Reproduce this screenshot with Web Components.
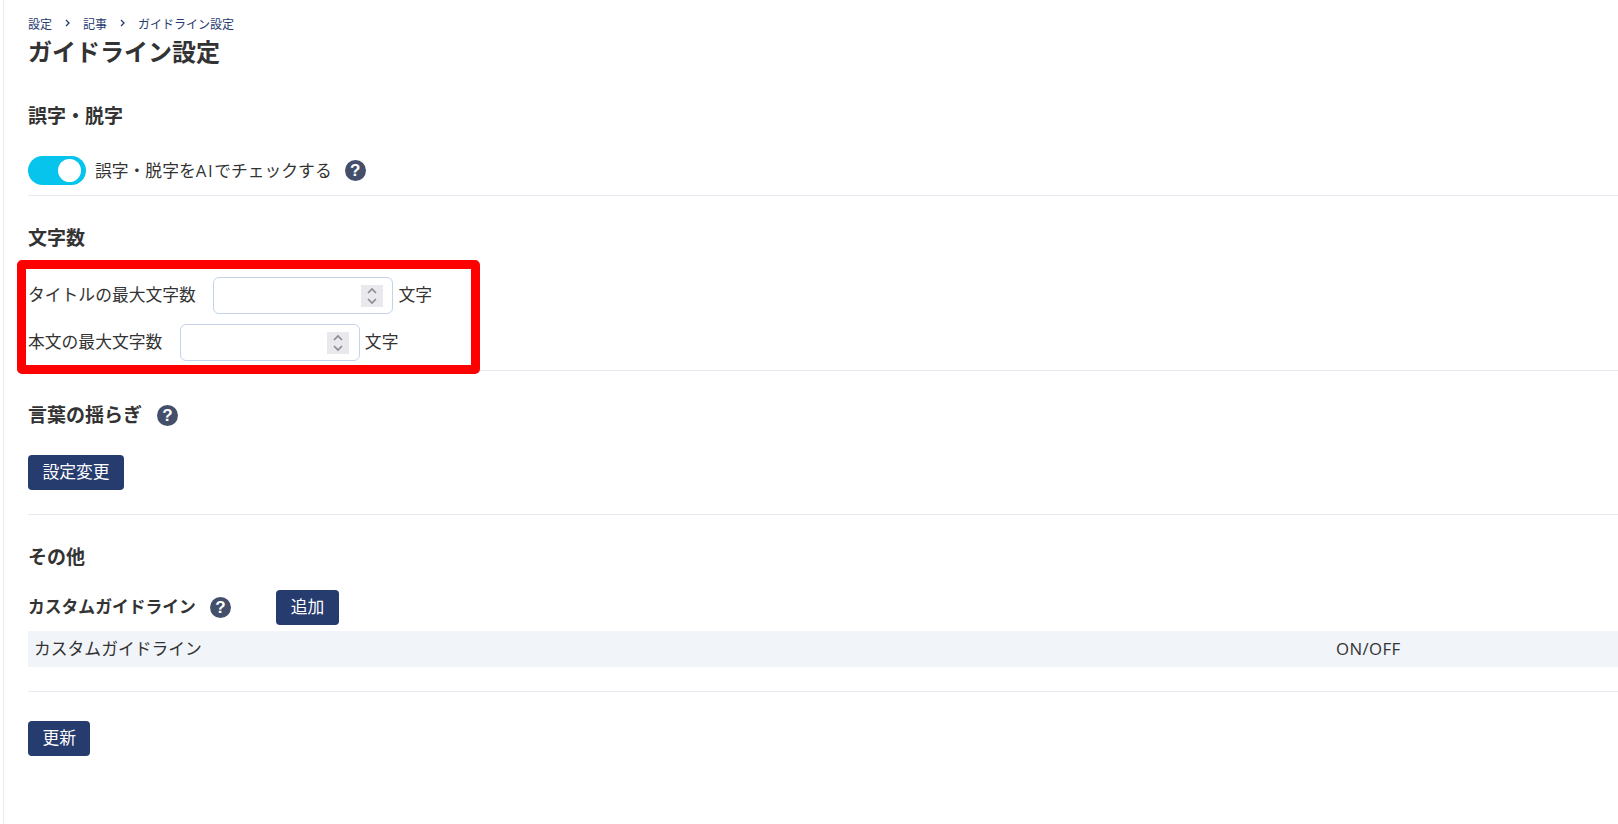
<!DOCTYPE html>
<html lang="ja">
<head>
<meta charset="utf-8">
<title>ガイドライン設定</title>
<style>
  html, body { margin: 0; background: #fff; }
  body { font-family: "Noto Sans CJK JP", "Noto Sans", sans-serif; color: #333; font-size: 16.8px; }
  .latin { font-family: "Open Sans", sans-serif; letter-spacing: 1.6px; }
</style>
</head>
<body>
<gl-page>
  <gl-breadcrumb slot="crumbs" items="設定,記事,ガイドライン設定"></gl-breadcrumb>
  <span slot="title">ガイドライン設定</span>

  <gl-section heading="誤字・脱字" top="32" gap="26" bottom="10">
    <gl-toggle checked>誤字・脱字を<span class="latin">AI</span>でチェックする<gl-help slot="after"></gl-help></gl-toggle>
  </gl-section>

  <gl-section heading="文字数" top="28" gap="25" bottom="9">
    <gl-limit-form>
      <gl-number-field>タイトルの最大文字数</gl-number-field>
      <gl-number-field>本文の最大文字数</gl-number-field>
    </gl-limit-form>
  </gl-section>

  <gl-section heading="言葉の揺らぎ" help top="30" gap="26" bottom="24">
    <gl-button>設定変更</gl-button>
  </gl-section>

  <gl-section heading="その他" top="28" gap="19" bottom="24">
    <gl-custom-list label="カスタムガイドライン" action="追加"></gl-custom-list>
  </gl-section>

  <gl-button class="submit" style="margin-top:29px">更新</gl-button>
</gl-page>

<script>
class GlPage extends HTMLElement {
    connectedCallback() {
        this.root = this.attachShadow({ mode: 'open' });
        this.root.innerHTML = `
          <style>
          :host { display: block; margin-left: 3px; min-height: 824px; box-sizing: border-box; border-left: 1px solid #e8eaf0; padding: 14px 0 0 24px; }
          .title { font-size: 24px; font-weight: 700; line-height: 34px; padding-bottom: 2px; color: #333; }
          </style>
          <slot name="crumbs"></slot>
          <div class="title"><slot name="title"></slot></div>
          <slot></slot>
        `;
    }
}

class GlBreadcrumb extends HTMLElement {
    connectedCallback() {
        this.root = this.attachShadow({ mode: 'open' });
        const chevron = `<svg width="31" height="10" viewBox="0 0 31 10"><path d="M14 2 L17 5 L14 8" fill="none" stroke="#263b6e" stroke-width="1.3"/></svg>`;
        const items = this.getAttribute('items').split(',').map(t => `<span>${t}</span>`).join(chevron);
        this.root.innerHTML = `
          <style>
          :host { display: flex; align-items: center; height: 18px; padding-bottom: 2px; font-size: 12px; color: #263b6e; }
          svg { flex: none; }
          </style>
          ${items}
        `;
    }
}

class GlHelp extends HTMLElement {
    connectedCallback() {
        this.root = this.attachShadow({ mode: 'open' });
        this.root.innerHTML = `
          <style>
          :host { display: inline-flex; align-items: center; justify-content: center; width: 21px; height: 21px; border-radius: 50%; background: #434f6b; color: #fff; font: 700 17px/21px "Liberation Sans", sans-serif; flex: none; }
          </style>
          ?
        `;
    }
}

class GlSection extends HTMLElement {
    connectedCallback() {
        this.root = this.attachShadow({ mode: 'open' });
        const top = this.getAttribute('top');
        const gap = this.getAttribute('gap');
        const bottom = this.getAttribute('bottom');
        const help = this.hasAttribute('help') ? '<gl-help></gl-help>' : '';
        this.root.innerHTML = `
          <style>
          :host { display: block; padding: ${top}px 0 ${bottom}px; border-bottom: 1px solid #e6e9f0; }
          h2 { display: flex; align-items: center; gap: 15px; margin: 0 0 ${gap}px; height: 28px; font-size: 19px; font-weight: 700; line-height: 28px; color: #333; }
          h2 span { padding-bottom: 2px; }
          </style>
          <h2><span>${this.getAttribute('heading')}</span>${help}</h2>
          <slot></slot>
        `;
    }
}

class GlToggle extends HTMLElement {
    connectedCallback() {
        this.root = this.attachShadow({ mode: 'open' });
        this.root.innerHTML = `
          <style>
          :host { display: flex; align-items: center; height: 29px; }
          .track { width: 58px; height: 29px; border-radius: 15px; background: #06c4ec; display: flex; align-items: center; justify-content: flex-end; padding-right: 5px; box-sizing: border-box; }
          .knob { width: 23px; height: 23px; border-radius: 50%; background: #fff; }
          .label { margin-left: 9px; padding-bottom: 2px; }
          ::slotted(gl-help) { margin-left: 13px; }
          </style>
          <div class="track"><div class="knob"></div></div>
          <span class="label"><slot></slot></span>
          <slot name="after"></slot>
        `;
    }
}

class GlLimitForm extends HTMLElement {
    connectedCallback() {
        this.root = this.attachShadow({ mode: 'open' });
        this.root.innerHTML = `
          <style>
          :host { display: flex; flex-direction: column; gap: 10px; position: relative; }
          .mark { position: absolute; left: -11px; top: -17px; width: 463px; height: 114px; box-sizing: border-box; border: 9px solid #f00; border-radius: 5px; pointer-events: none; }
          </style>
          <slot></slot>
          <div class="mark"></div>
        `;
    }
}

class GlNumberField extends HTMLElement {
    connectedCallback() {
        this.root = this.attachShadow({ mode: 'open' });
        this.root.innerHTML = `
          <style>
          :host { display: flex; align-items: center; height: 37px; }
          .box { width: 180px; height: 37px; margin: 0 5px 0 17.6px; box-sizing: border-box; border: 1px solid #c5d3ea; border-radius: 6px; display: flex; align-items: center; justify-content: flex-end; padding-right: 9.5px; background: #fff; }
          .spin { width: 22px; height: 22px; background: #e9e9ed; }
          .text { padding-bottom: 4px; }
          svg { display: block; }
          </style>
          <span class="text"><slot></slot></span>
          <div class="box">
            <div class="spin"><svg width="22" height="22" viewBox="0 0 22 22"><path d="M7 8 L11 4 L15 8 M7 14 L11 18 L15 14" fill="none" stroke="#8b8b93" stroke-width="1.7"/></svg></div>
          </div>
          <span class="text">文字</span>
        `;
    }
}

class GlButton extends HTMLElement {
    connectedCallback() {
        this.root = this.attachShadow({ mode: 'open' });
        this.root.innerHTML = `
          <style>
          :host { display: flex; width: fit-content; height: 35px; box-sizing: border-box; padding: 0 14.4px 3px; align-items: center; border-radius: 4px; background: #263b6e; color: #fff; font-size: 16.8px; }
          </style>
          <slot></slot>
        `;
    }
}

class GlCustomList extends HTMLElement {
    connectedCallback() {
        this.root = this.attachShadow({ mode: 'open' });
        const label = this.getAttribute('label');
        this.root.innerHTML = `
          <style>
          :host { display: block; }
          .head { display: flex; align-items: center; height: 35px; }
          .head b { font-weight: 700; padding-bottom: 3px; }
          gl-help { margin-left: 14px; }
          gl-button { margin-left: 45px; padding: 0 15px 3px; }
          .row { display: grid; grid-template-columns: 1302px 1fr; height: 36px; margin-top: 6px; padding-left: 6px; align-items: center; background: #f1f4f9; }
          .row span { padding-bottom: 2px; }
          .state { font-family: "Open Sans", sans-serif; letter-spacing: .4px; }
          </style>
          <div class="head"><b>${label}</b><gl-help></gl-help><gl-button>${this.getAttribute('action')}</gl-button></div>
          <div class="row"><span>${label}</span><span class="state">ON/OFF</span></div>
        `;
    }
}

customElements.define('gl-page', GlPage);
customElements.define('gl-breadcrumb', GlBreadcrumb);
customElements.define('gl-help', GlHelp);
customElements.define('gl-section', GlSection);
customElements.define('gl-toggle', GlToggle);
customElements.define('gl-limit-form', GlLimitForm);
customElements.define('gl-number-field', GlNumberField);
customElements.define('gl-button', GlButton);
customElements.define('gl-custom-list', GlCustomList);
</script>
</body>
</html>
